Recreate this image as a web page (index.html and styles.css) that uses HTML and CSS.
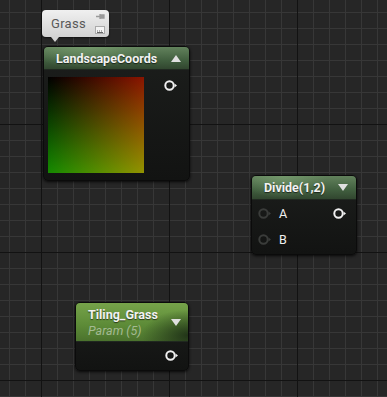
FILE: index.html
```html
<!DOCTYPE html>
<html lang="en">
<head>
  <meta charset="UTF-8">
  <title>Material Graph</title>
  <link rel="stylesheet" href="styles.css">
</head>
<body>
  <div class="graph">

    <!-- comment bubble over LandscapeCoords -->
    <div class="bubble">
      <span class="bubble-text">Grass</span>
      <div class="bubble-icons">
        <svg width="9" height="7" viewBox="0 0 9 7"><path d="M0 3.5h4M4 1v5M5 2h3v3H5z" stroke="#9a9a9a" stroke-width="1.3" fill="#9a9a9a"/></svg>
        <svg width="10" height="8" viewBox="0 0 10 8"><rect x="0.5" y="0.5" width="9" height="7" fill="#f4f4f4" stroke="#aaa"/><path d="M2 5h1M4 5h1M6 5h1M2 6.5h6" stroke="#666"/></svg>
      </div>
    </div>

    <div class="node node-coords">
      <div class="node-head">
        <span class="node-title">LandscapeCoords</span>
        <span class="arrow arrow-up"></span>
      </div>
      <div class="node-body coords-body">
        <div class="preview"></div>
        <svg class="pin pin-out" width="13" height="11" viewBox="0 0 13 11"><circle cx="5.5" cy="5.5" r="4.2" fill="none" stroke="#f0f0f0" stroke-width="2"/><path d="M10.5 3.5L13 5.5L10.5 7.5z" fill="#f0f0f0"/></svg>
      </div>
    </div>

    <div class="node node-divide">
      <div class="node-head">
        <span class="node-title">Divide(1,2)</span>
        <span class="arrow arrow-down"></span>
      </div>
      <div class="node-body divide-body">
        <div class="pin-row">
          <svg class="pin" width="13" height="11" viewBox="0 0 13 11"><circle cx="5.5" cy="5.5" r="4.2" fill="none" stroke="#3a3c3a" stroke-width="2"/><path d="M10.5 3.5L13 5.5L10.5 7.5z" fill="#3a3c3a"/></svg>
          <span class="pin-label">A</span>
          <svg class="pin" width="13" height="11" viewBox="0 0 13 11"><circle cx="5.5" cy="5.5" r="4.2" fill="none" stroke="#f0f0f0" stroke-width="2"/><path d="M10.5 3.5L13 5.5L10.5 7.5z" fill="#f0f0f0"/></svg>
        </div>
        <div class="pin-row">
          <svg class="pin" width="13" height="11" viewBox="0 0 13 11"><circle cx="5.5" cy="5.5" r="4.2" fill="none" stroke="#3a3c3a" stroke-width="2"/><path d="M10.5 3.5L13 5.5L10.5 7.5z" fill="#3a3c3a"/></svg>
          <span class="pin-label">B</span>
        </div>
      </div>
    </div>

    <div class="node node-param">
      <div class="node-head param-head">
        <div class="title-stack">
          <span class="node-title">Tiling_Grass</span>
          <span class="node-sub">Param (5)</span>
        </div>
        <span class="arrow arrow-down"></span>
      </div>
      <div class="node-body param-body">
        <svg class="pin" width="13" height="11" viewBox="0 0 13 11"><circle cx="5.5" cy="5.5" r="4.2" fill="none" stroke="#f0f0f0" stroke-width="2"/><path d="M10.5 3.5L13 5.5L10.5 7.5z" fill="#f0f0f0"/></svg>
      </div>
    </div>

  </div>
</body>
</html>
```

FILE: styles.css
```css
* { margin: 0; padding: 0; box-sizing: border-box; }
html, body { width: 100%; height: 100%; }
body {
  font-family: Roboto, "Liberation Sans", sans-serif;
  background: #262626;
  overflow: hidden;
}

/* grid: major lines every 128px, minor every 16px */
.graph {
  position: relative;
  width: 387px;
  height: 397px;
  background-color: #262626;
  background-image:
    linear-gradient(to right, #121212 1px, transparent 1px),
    linear-gradient(to bottom, #121212 1px, transparent 1px),
    linear-gradient(to right, #373737 1px, transparent 1px),
    linear-gradient(to bottom, #373737 1px, transparent 1px);
  background-size: 128px 128px, 128px 128px, 16px 16px, 16px 16px;
  background-position: 41px 0, 0 124px, 9px 0, 0 12px;
}

/* comment bubble */
.bubble {
  position: absolute;
  left: 42px;
  top: 10px;
  width: 67px;
  height: 27px;
  border-radius: 4px;
  background: linear-gradient(#f0f0f0, #d2d2d2);
  box-shadow: 0 1px 2px rgba(0,0,0,0.6);
  display: flex;
  align-items: center;
  justify-content: space-between;
  padding: 0 4px 0 9px;
}
.bubble::after {
  content: '';
  position: absolute;
  left: 9px;
  bottom: -5px;
  border-left: 4px solid transparent;
  border-right: 4px solid transparent;
  border-top: 5px solid #d2d2d2;
}
.bubble-text { font-size: 13px; color: #585858; letter-spacing: 0.3px; }
.bubble-icons {
  display: flex;
  flex-direction: column;
  justify-content: space-between;
  align-items: center;
  height: 21px;
}

/* nodes */
.node {
  position: absolute;
  border-radius: 5px;
  background: linear-gradient(#1c1e1c, #121312);
  border: 1px solid #0b0b0b;
  box-shadow: 0 1px 3px rgba(0,0,0,0.8);
  overflow: hidden;
}
.node-head {
  display: flex;
  align-items: center;
  justify-content: space-between;
  height: 23px;
  padding: 0 8px 0 12px;
  background:
    radial-gradient(ellipse 60% 140% at 30% 0%, rgba(130,170,120,0.55), transparent 70%),
    linear-gradient(#62825c, #415f3f 60%, #31462f);
  border-bottom: 1px solid #202820;
}
.node-title {
  color: #f2f2f2;
  font-weight: bold;
  font-size: 12.5px;
  text-shadow: 0 1px 1px rgba(0,0,0,0.6);
}
.arrow { width: 0; height: 0; border-left: 5px solid transparent; border-right: 5px solid transparent; }
.arrow-up { border-bottom: 7px solid #e0e0e0; }
.arrow-down { border-top: 7px solid #e0e0e0; }

.node-body { position: relative; }

.node-coords { left: 43px; top: 46px; width: 147px; height: 135px; }
.coords-body { display: flex; justify-content: space-between; padding: 7px 12px 0 4px; }
.preview {
  width: 96px;
  height: 96px;
  background:
    linear-gradient(to right, #000, #8a1400),
    linear-gradient(to bottom, #000, #148a00);
  background-blend-mode: screen;
}
.pin-out { margin-top: 3px; }

.node-divide { left: 251px; top: 175px; width: 106px; height: 80px; }
.node-divide .node-head { height: 24px; padding: 0 8px 0 12px; }
.divide-body { padding: 8px 10px 0 6px; display: flex; flex-direction: column; gap: 15px; }
.pin-row { display: flex; align-items: center; height: 11px; }
.pin-label { color: #f0f0f0; font-size: 12.5px; margin-left: 8px; flex: 1; }

.node-param { left: 75px; top: 302px; width: 114px; height: 69px; }
.param-head {
  height: 39px;
  padding: 0 7px 0 12px;
  background:
    radial-gradient(ellipse 55% 90% at 100% 85%, rgba(25,40,20,0.85), transparent 75%),
    linear-gradient(#76a34a, #5c8a37 60%, #4b722d);
}
.title-stack { display: flex; flex-direction: column; }
.node-sub { color: #a4ba92; font-size: 12.5px; font-style: italic; margin-top: 1px; }
.param-body { display: flex; justify-content: flex-end; padding: 8px 10px 0 0; }
```
